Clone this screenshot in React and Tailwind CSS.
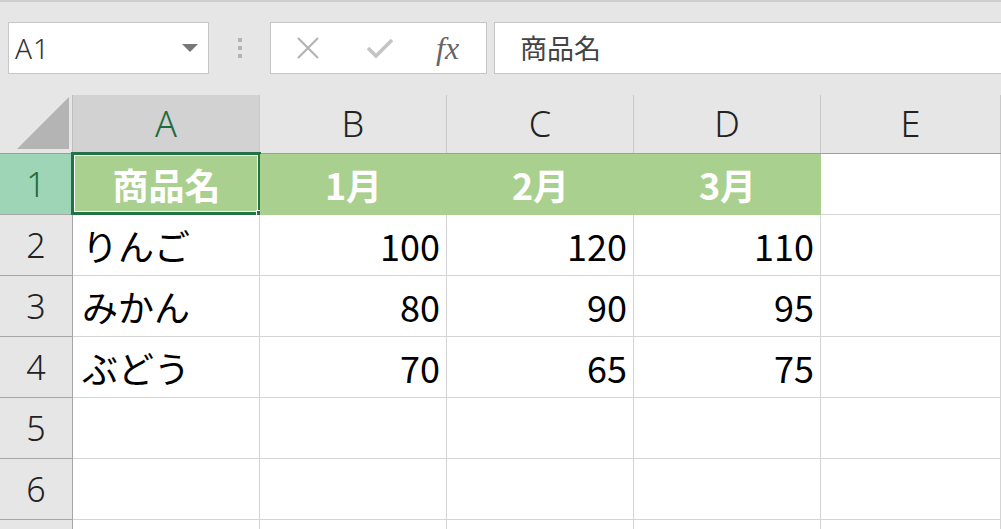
import React from "react";

const FONT = { fontFamily: '"Noto Sans CJK JP", "Noto Sans", sans-serif' };
const UI = { fontFamily: '"Noto Sans", "Noto Sans CJK JP", sans-serif' };

const cols = ["A", "B", "C", "D", "E"];

const rows = [
  { n: "1", cells: ["商品名", "1月", "2月", "3月", ""], head: true },
  { n: "2", cells: ["りんご", "100", "120", "110", ""] },
  { n: "3", cells: ["みかん", "80", "90", "95", ""] },
  { n: "4", cells: ["ぶどう", "70", "65", "75", ""] },
  { n: "5", cells: ["", "", "", "", ""] },
  { n: "6", cells: ["", "", "", "", ""] },
  { n: "", cells: ["", "", "", "", ""] },
];

const FormulaBar = () => (
  <div className="flex items-center h-[52px] mt-[20px] mb-[21px]">
    {/* name box */}
    <div
      className="ml-[8px] w-[201px] h-full bg-white border border-[#c6c6c6] flex items-center justify-between pl-[6px] pr-[10px]"
      style={UI}
    >
      <span className="text-[28px] text-[#333] font-light tracking-[1px]">A1</span>
      <svg width="16" height="8" viewBox="0 0 16 8">
        <path d="M0 0 L16 0 L8 8 Z" fill="#777" />
      </svg>
    </div>
    <div className="w-[61px] flex flex-col items-center gap-[4px]">
      <span className="w-[4px] h-[4px] bg-[#b3b3b3]" />
      <span className="w-[4px] h-[4px] bg-[#b3b3b3]" />
      <span className="w-[4px] h-[4px] bg-[#b3b3b3]" />
    </div>
    {/* cancel / enter / fx */}
    <div className="w-[217px] h-full bg-white border border-[#c6c6c6] flex items-center">
      <svg width="22" height="22" viewBox="0 0 22 22" className="ml-[26px]">
        <path d="M1 1 L21 21 M21 1 L1 21" stroke="#b4b4b4" strokeWidth="2.2" />
      </svg>
      <svg width="26" height="22" viewBox="0 0 26 22" className="ml-[48px]">
        <path d="M1 11 L9 19 L25 3" stroke="#c4c4c4" strokeWidth="3.6" fill="none" />
      </svg>
      <span
        className="ml-[43px] text-[32px] italic text-[#666] leading-none"
        style={{ fontFamily: '"Liberation Serif", serif' }}
      >
        fx
      </span>
    </div>
    <div className="ml-[7px] flex-1 h-full bg-white border border-[#c6c6c6] border-r-0 flex items-center pl-[25px]">
      <span className="text-[27px] text-[#444]" style={FONT}>
        商品名
      </span>
    </div>
  </div>
);

const ColumnHeader = () => (
  <div className="flex h-[59px] border-b border-[#9e9e9e]">
    <div className="w-[73px] shrink-0 border-r border-[#bdbdbd] flex items-end justify-end pr-[3px] pb-[4px]">
      <svg width="52" height="52" viewBox="0 0 52 52">
        <path d="M0 52 L52 0 L52 52 Z" fill="#b4b4b4" />
      </svg>
    </div>
    {cols.map((c, i) => (
      <div
        key={c}
        className={`${i === 4 ? "flex-1" : "w-[187px] shrink-0"} ${
          i === 0 ? "bg-[#d2d2d2] text-[#1e6b41]" : "bg-[#e6e6e6] text-[#222]"
        } border-r border-[#c8c8c8] flex items-center justify-center text-[36px] font-light`}
        style={UI}
      >
        {c}
      </div>
    ))}
  </div>
);

const Row = ({ row }) => (
  <div className="flex h-[61px]">
    <div
      className={`w-[73px] shrink-0 border-r border-b border-[#a6a6a6] flex items-center justify-center text-[34px] font-light ${
        row.head ? "bg-[#9fd5b7] text-[#1e6b41]" : "bg-[#e6e6e6] text-[#222]"
      }`}
      style={UI}
    >
      {row.n}
    </div>
    {row.cells.map((v, i) => {
      const green = row.head && i < 4;
      const numeric = /^\d+$/.test(v);
      return (
        <div
          key={i}
          className={`relative ${i === 4 ? "flex-1" : "w-[187px] shrink-0"} flex items-center ${
            green
              ? "bg-[#a9d08e] justify-center text-white font-bold border-b border-[#a9d08e]"
              : "bg-white border-r border-b border-[#d4d4d4] text-black"
          } ${numeric ? "justify-end pr-[6px]" : !green ? "pl-[9px]" : ""} text-[36px]`}
          style={FONT}
        >
          {v}
          {row.head && i === 0 && (
            <>
              <div className="absolute left-[-2px] top-[-2px] w-[190px] h-[63px] border-[3px] border-[#217346]">
                <div className="w-full h-full border border-white" />
              </div>
              <div className="absolute left-[183px] top-[56px] w-[9px] h-[9px] bg-[#217346] border border-white" />
            </>
          )}
        </div>
      );
    })}
  </div>
);

export default function App() {
  return (
    <div className="w-[1001px] h-[529px] overflow-hidden bg-[#e6e6e6]">
      <div className="h-[2px] bg-[#cfcfcf]" />
      <FormulaBar />
      <ColumnHeader />
      {rows.map((r, idx) => (
        <Row key={idx} row={r} />
      ))}
    </div>
  );
}
